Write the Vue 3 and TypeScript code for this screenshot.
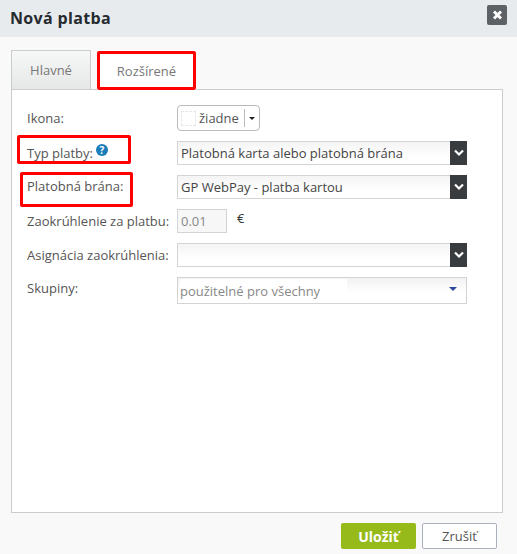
<template>
  <div class="dialog">
    <header class="head">
      <h1>Nová platba</h1>
      <button class="close" type="button" aria-label="Zavrieť">
        <svg width="11" height="10" viewBox="0 0 11 10"><path d="M2 1.5l7 7M9 1.5l-7 7" stroke="#fff" stroke-width="3" fill="none" /></svg>
      </button>
    </header>

    <div class="body">
      <div class="tabs">
        <div class="tab">Hlavné</div>
        <div class="tab active">Rozšírené</div>
      </div>

      <div class="panel">
        <div class="row row-icon">
          <label>Ikona:</label>
          <div class="icon-pick">
            <span class="swatch"></span>
            <span class="pick-text">žiadne</span>
            <span class="pick-arrow"></span>
          </div>
        </div>

        <div class="row row-type">
          <label>Typ platby:<span class="help">?</span></label>
          <div class="select">
            <span>Platobná karta alebo platobná brána</span>
            <span class="chevron"><svg width="12" height="8" viewBox="0 0 12 8"><path d="M2 1.5l4 4 4-4" stroke="#fff" stroke-width="2.2" fill="none" /></svg></span>
          </div>
        </div>

        <div class="row row-gate">
          <label>Platobná brána:</label>
          <div class="select">
            <span>GP WebPay - platba kartou</span>
            <span class="chevron"><svg width="12" height="8" viewBox="0 0 12 8"><path d="M2 1.5l4 4 4-4" stroke="#fff" stroke-width="2.2" fill="none" /></svg></span>
          </div>
        </div>

        <div class="row row-round">
          <label>Zaokrúhlenie za platbu:</label>
          <div class="amount">0.01</div>
          <span class="euro">€</span>
        </div>

        <div class="row row-assign">
          <label>Asignácia zaokrúhlenia:</label>
          <div class="select">
            <span></span>
            <span class="chevron"><svg width="12" height="8" viewBox="0 0 12 8"><path d="M2 1.5l4 4 4-4" stroke="#fff" stroke-width="2.2" fill="none" /></svg></span>
          </div>
        </div>

        <div class="row row-groups">
          <label>Skupiny:</label>
          <div class="multi">
            <span class="multi-text">použitelné pro všechny</span>
            <span class="multi-arrow"></span>
          </div>
        </div>
      </div>

      <footer class="foot">
        <button class="btn save" type="button">Uložiť</button>
        <button class="btn cancel" type="button">Zrušiť</button>
      </footer>

      <!-- red annotations lying over the form -->
      <i class="mark mark-tab"></i>
      <i class="mark mark-type"></i>
      <i class="mark mark-gate"></i>
    </div>
  </div>
</template>

<script setup lang="ts">
</script>

<style>
html,
body {
  margin: 0;
  background: #f9f9f9;
}
</style>

<style scoped>
.dialog {
  width: 517px;
  height: 554px;
  overflow: hidden;
  display: flex;
  flex-direction: column;
  font-family: "Open Sans", "Liberation Sans", sans-serif;
  font-size: 13px;
  color: #555;
  background: #f9f9f9;
}

.head {
  height: 37px;
  flex: none;
  display: flex;
  align-items: center;
  justify-content: space-between;
  padding: 0 10px 0 10px;
  background: #e8ebee;
}

.head h1 {
  margin: 0 0 2px;
  font-size: 16px;
  font-weight: 700;
  letter-spacing: 0.35px;
  color: #262b30;
}

.close {
  width: 20px;
  height: 20px;
  margin: 0 0 7px;
  padding: 0;
  border: 0;
  border-radius: 2px;
  background: #5c6165;
  display: flex;
  align-items: center;
  justify-content: center;
}

.body {
  position: relative;
  flex: 1;
  padding: 13px 14px 0 11px;
  display: flex;
  flex-direction: column;
}

.tabs {
  display: flex;
  gap: 6px;
  height: 39px;
  flex: none;
  position: relative;
  z-index: 1;
}

.tab {
  width: 80px;
  height: 39px;
  box-sizing: border-box;
  border: 1px solid #ccc;
  border-bottom: 0;
  display: flex;
  align-items: center;
  justify-content: center;
  color: #777;
  background: linear-gradient(#f6f7f7, #e6e8e8);
}

.tab.active {
  width: 99px;
  height: 40px;
  background: #fff;
  border-color: transparent;
}

.panel {
  height: 424px;
  box-sizing: border-box;
  flex: none;
  border: 1px solid #ccc;
  background: #fff;
  padding: 15px 35px 0 15px;
}

.row {
  display: flex;
  align-items: flex-start;
}

.row label {
  width: 150px;
  flex: none;
  color: #555;
  line-height: 18px;
  white-space: nowrap;
  position: relative;
}

.row-icon {
  height: 36px;
}

.row-icon label {
  padding-top: 4px;
}

.row-type {
  height: 34px;
}

.row-type label {
  padding-top: 3px;
}

.row-gate {
  height: 34px;
}

.row-gate label {
  padding-top: 2px;
}

.row-round {
  height: 34px;
}

.row-round label {
  padding-top: 3px;
}

.row-assign {
  height: 34px;
}

.row-assign label {
  padding-top: 3px;
}

.row-groups label {
  padding-top: 2px;
}

.help {
  position: absolute;
  left: 69px;
  top: 3px;
  width: 12px;
  height: 12px;
  border-radius: 50%;
  background: #1a7cb8;
  color: #fff;
  font-size: 10px;
  font-weight: 700;
  line-height: 12px;
  text-align: center;
}

.icon-pick {
  width: 83px;
  height: 26px;
  box-sizing: border-box;
  border: 1px solid #bbb;
  border-radius: 4px;
  background: #fff;
  display: flex;
  align-items: center;
  padding-left: 3px;
  position: relative;
}

.swatch {
  width: 15px;
  height: 15px;
  box-sizing: border-box;
  border: 1px dashed #e8e8e8;
  flex: none;
}

.pick-text {
  margin-left: 3px;
  font-size: 13px;
  color: #555;
}

.pick-arrow {
  position: absolute;
  right: 0;
  top: 3px;
  bottom: 3px;
  width: 14px;
  border-left: 1px solid #bbb;
}

.pick-arrow::after {
  content: "";
  position: absolute;
  left: 4px;
  top: 8px;
  border: 3px solid transparent;
  border-top: 3px solid #222;
  border-bottom: 0;
}

.select {
  width: 290px;
  height: 24px;
  box-sizing: border-box;
  border: 1px solid #d4d4d4;
  border-right: 0;
  background: linear-gradient(#f4f4f4, #fff 70%);
  display: flex;
  align-items: center;
  justify-content: space-between;
  padding-left: 3px;
  color: #444;
}

.chevron {
  width: 17px;
  height: 24px;
  margin-top: -1px;
  margin-bottom: -1px;
  flex: none;
  background: #383c3f;
  display: flex;
  align-items: center;
  justify-content: center;
}

.amount {
  width: 50px;
  height: 24px;
  box-sizing: border-box;
  border: 1px solid #d4d4d4;
  background: #f7f7f7;
  color: #888;
  padding-left: 3px;
  line-height: 23px;
}

.euro {
  margin-left: 10px;
  line-height: 18px;
  color: #333;
}

.multi {
  width: 290px;
  height: 27px;
  box-sizing: border-box;
  border: 1px solid #d4d4d4;
  background: linear-gradient(#f2f2f2, #fff 60%);
  display: flex;
  align-items: center;
  justify-content: space-between;
  padding: 0 9px 0 2px;
}

.multi-text {
  color: #888;
  background: #fff;
  padding-right: 27px;
  line-height: 24px;
  margin-top: 1px;
}

.multi-arrow {
  border: 4px solid transparent;
  border-top: 4px solid #2b4a9c;
  border-bottom: 0;
  margin-bottom: 3px;
}

.foot {
  display: flex;
  justify-content: flex-end;
  gap: 6px;
  padding: 10px 6px 0 0;
}

.btn {
  width: 75px;
  height: 26px;
  box-sizing: border-box;
  border-radius: 2px;
  font-family: inherit;
  padding: 0;
}

.save {
  border: 0;
  background: #96ba1a;
  color: #fff;
  font-size: 14px;
  font-weight: 700;
}

.cancel {
  border: 1px solid #aab0bd;
  background: #fff;
  color: #555;
  font-size: 13px;
}

.mark {
  position: absolute;
  box-sizing: border-box;
  border: 3px solid #f00;
  border-radius: 2px;
  pointer-events: none;
  z-index: 2;
}

.mark-tab {
  left: 97px;
  top: 14px;
  width: 99px;
  height: 39px;
}

.mark-type {
  left: 17px;
  top: 98px;
  width: 114px;
  height: 29px;
}

.mark-gate {
  left: 20px;
  top: 135px;
  width: 113px;
  height: 35px;
}
</style>
